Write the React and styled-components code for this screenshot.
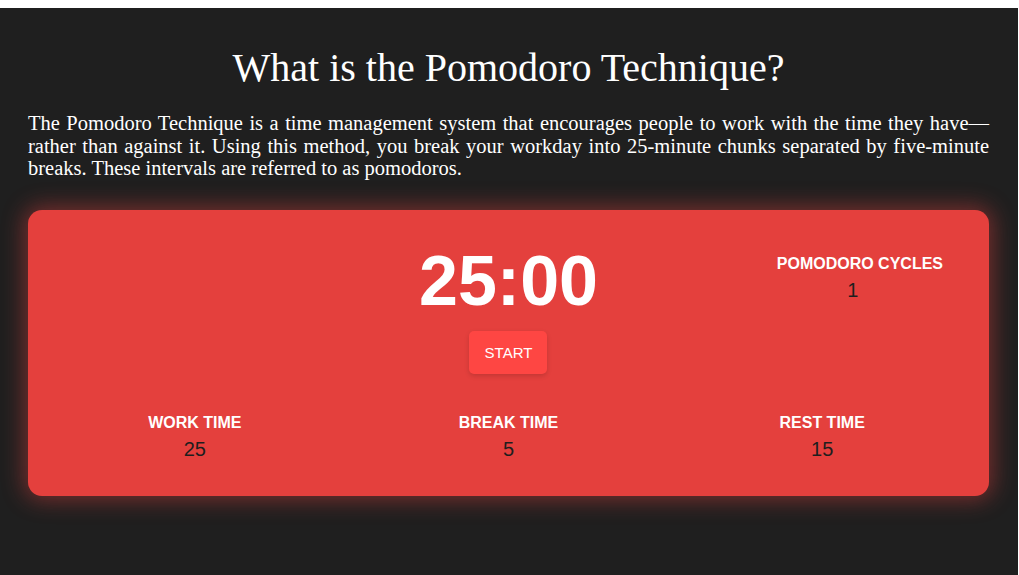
import React from "react";
import styled, { createGlobalStyle } from "styled-components";

const Global = createGlobalStyle`
  html, body { background: #ffffff; }
  body { margin: 8px 1px 0 0; }
  * { box-sizing: border-box; }
`;

const Page = styled.div`
  background: #1f1f1f;
  min-height: 567px;
  padding: 37px 29px 40px 28px;
  color: #ffffff;
  font-family: "Liberation Serif", "Times New Roman", serif;
`;

const Title = styled.h1`
  margin: 0 0 21px;
  text-align: center;
  font-weight: normal;
  font-size: 40px;
  line-height: 1.15;
`;

const Intro = styled.p`
  margin: 0 0 30px;
  font-size: 20.5px;
  line-height: 22.5px;
  text-align: justify;
`;

const Card = styled.section`
  background: #e4403d;
  border-radius: 14px;
  box-shadow: 0 0 22px 4px rgba(228, 64, 61, 0.45);
  padding: 33px 10px 36px;
  font-family: "Liberation Sans", Arial, sans-serif;
  display: flex;
  flex-direction: column;
`;

const TopRow = styled.div`
  display: grid;
  grid-template-columns: 1fr auto 1fr;
  align-items: start;
`;

const Center = styled.div`
  grid-column: 2;
  display: flex;
  flex-direction: column;
  align-items: center;
`;

const Clock = styled.div`
  font-size: 70px;
  font-weight: bold;
  line-height: 1;
  color: #ffffff;
  margin-top: 3px;
`;

const StartButton = styled.button`
  margin-top: 15px;
  width: 78px;
  height: 43px;
  border: none;
  border-radius: 5px;
  background: #fe4643;
  color: #ffffff;
  font-family: "Liberation Sans", Arial, sans-serif;
  font-size: 15px;
  box-shadow: 0 2px 5px rgba(0, 0, 0, 0.15);
  cursor: pointer;
`;

const Right = styled.div`
  grid-column: 3;
  justify-self: end;
  margin: 12px 36px 0 0;
`;

const Stat = styled.div`
  display: flex;
  flex-direction: column;
  align-items: center;
  gap: 6px;
`;

const Label = styled.div`
  font-size: 16px;
  font-weight: bold;
  color: #ffffff;
  line-height: 18px;
`;

const Value = styled.div`
  font-size: 20px;
  color: #1e1e1e;
  line-height: 22px;
  padding-right: ${(p) => p.$shift || 0}px;
`;

const BottomRow = styled.div`
  margin-top: 40px;
  display: grid;
  grid-template-columns: repeat(3, 1fr);
`;

function StatBlock({ label, value, shift }) {
  return (
    <Stat>
      <Label>{label}</Label>
      <Value $shift={shift}>{value}</Value>
    </Stat>
  );
}

export default function App() {
  return (
    <>
      <Global />
      <Page>
        <Title>What is the Pomodoro Technique?</Title>
        <Intro>
          The Pomodoro Technique is a time management system that encourages
          people to work with the time they have—rather than against it. Using
          this method, you break your workday into 25-minute chunks separated by
          five-minute breaks. These intervals are referred to as pomodoros.
        </Intro>
        <Card>
          <TopRow>
            <Center>
              <Clock>25:00</Clock>
              <StartButton>START</StartButton>
            </Center>
            <Right>
              <StatBlock label="POMODORO CYCLES" value="1" shift={14} />
            </Right>
          </TopRow>
          <BottomRow>
            <StatBlock label="WORK TIME" value="25" />
            <StatBlock label="BREAK TIME" value="5" />
            <StatBlock label="REST TIME" value="15" />
          </BottomRow>
        </Card>
      </Page>
    </>
  );
}
